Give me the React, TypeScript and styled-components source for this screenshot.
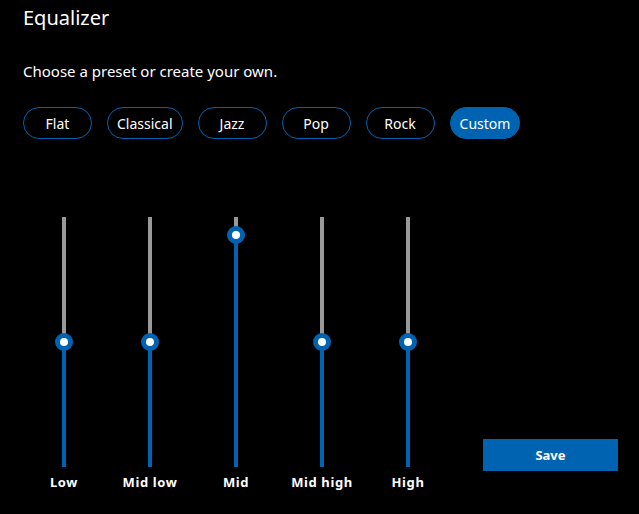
import React, { useState } from "react";
import styled, { createGlobalStyle } from "styled-components";

const GlobalStyle = createGlobalStyle`
  html, body {
    margin: 0;
    background: #000;
    color: #fff;
    font-family: "Noto Sans", "Open Sans", sans-serif;
  }
`;

const TRACK_HEIGHT = 250;
const BLUE = "#0063b1";

const Page = styled.div`
  width: 639px;
  height: 514px;
  box-sizing: border-box;
  padding: 4px 21px 0 23px;
  display: flex;
  flex-direction: column;
`;

const Title = styled.h1`
  margin: 0;
  font-size: 20px;
  line-height: 28px;
  font-weight: 400;
`;

const Subtitle = styled.p`
  margin: 29px 0 0;
  font-size: 15px;
  line-height: 20px;
`;

const PresetRow = styled.div`
  display: flex;
  gap: 15px;
  margin-top: 26px;
`;

const Pill = styled.button<{ $active?: boolean }>`
  height: 32px;
  min-width: 69px;
  box-sizing: border-box;
  padding: 0 9px;
  border-radius: 16px;
  border: 1px solid ${BLUE};
  background: ${(p) => (p.$active ? BLUE : "transparent")};
  color: #fff;
  font-family: inherit;
  font-size: 14px;
  cursor: pointer;
`;

const Bottom = styled.div`
  display: flex;
  align-items: flex-end;
  justify-content: space-between;
  margin-top: 78px;
`;

const SliderGroup = styled.div`
  display: flex;
  gap: 4px;
`;

const Column = styled.div`
  width: 82px;
  display: flex;
  flex-direction: column;
  align-items: center;
  gap: 6px;
`;

const Track = styled.div`
  position: relative;
  width: 4px;
  height: ${TRACK_HEIGHT}px;
  background: #999;
`;

const Fill = styled.div`
  position: absolute;
  left: 0;
  right: 0;
  bottom: 0;
  background: ${BLUE};
`;

const Thumb = styled.div`
  position: absolute;
  left: 50%;
  width: 18px;
  height: 18px;
  box-sizing: border-box;
  border-radius: 50%;
  border: 5px solid ${BLUE};
  background: #fff;
  transform: translate(-50%, -50%);
`;

const Label = styled.span`
  font-size: 13px;
  line-height: 18px;
  font-weight: 700;
  letter-spacing: 0.6px;
  white-space: nowrap;
`;

const SaveButton = styled.button`
  width: 135px;
  height: 32px;
  margin-bottom: 20px;
  border: none;
  background: ${BLUE};
  color: #fff;
  font-family: inherit;
  font-size: 13px;
  font-weight: 700;
  cursor: pointer;
`;

const presets = ["Flat", "Classical", "Jazz", "Pop", "Rock", "Custom"];

const bands = [
  { name: "Low", value: 50 },
  { name: "Mid low", value: 50 },
  { name: "Mid", value: 92.8 },
  { name: "Mid high", value: 50 },
  { name: "High", value: 50 },
];

export default function App() {
  const [preset, setPreset] = useState("Custom");

  return (
    <>
      <GlobalStyle />
      <Page>
        <Title>Equalizer</Title>
        <Subtitle>Choose a preset or create your own.</Subtitle>
        <PresetRow>
          {presets.map((p) => (
            <Pill key={p} $active={p === preset} onClick={() => setPreset(p)}>
              {p}
            </Pill>
          ))}
        </PresetRow>
        <Bottom>
          <SliderGroup>
            {bands.map((b) => (
              <Column key={b.name}>
                <Track>
                  <Fill style={{ height: `${b.value}%` }} />
                  <Thumb style={{ top: `${100 - b.value}%` }} />
                </Track>
                <Label>{b.name}</Label>
              </Column>
            ))}
          </SliderGroup>
          <SaveButton>Save</SaveButton>
        </Bottom>
      </Page>
    </>
  );
}
